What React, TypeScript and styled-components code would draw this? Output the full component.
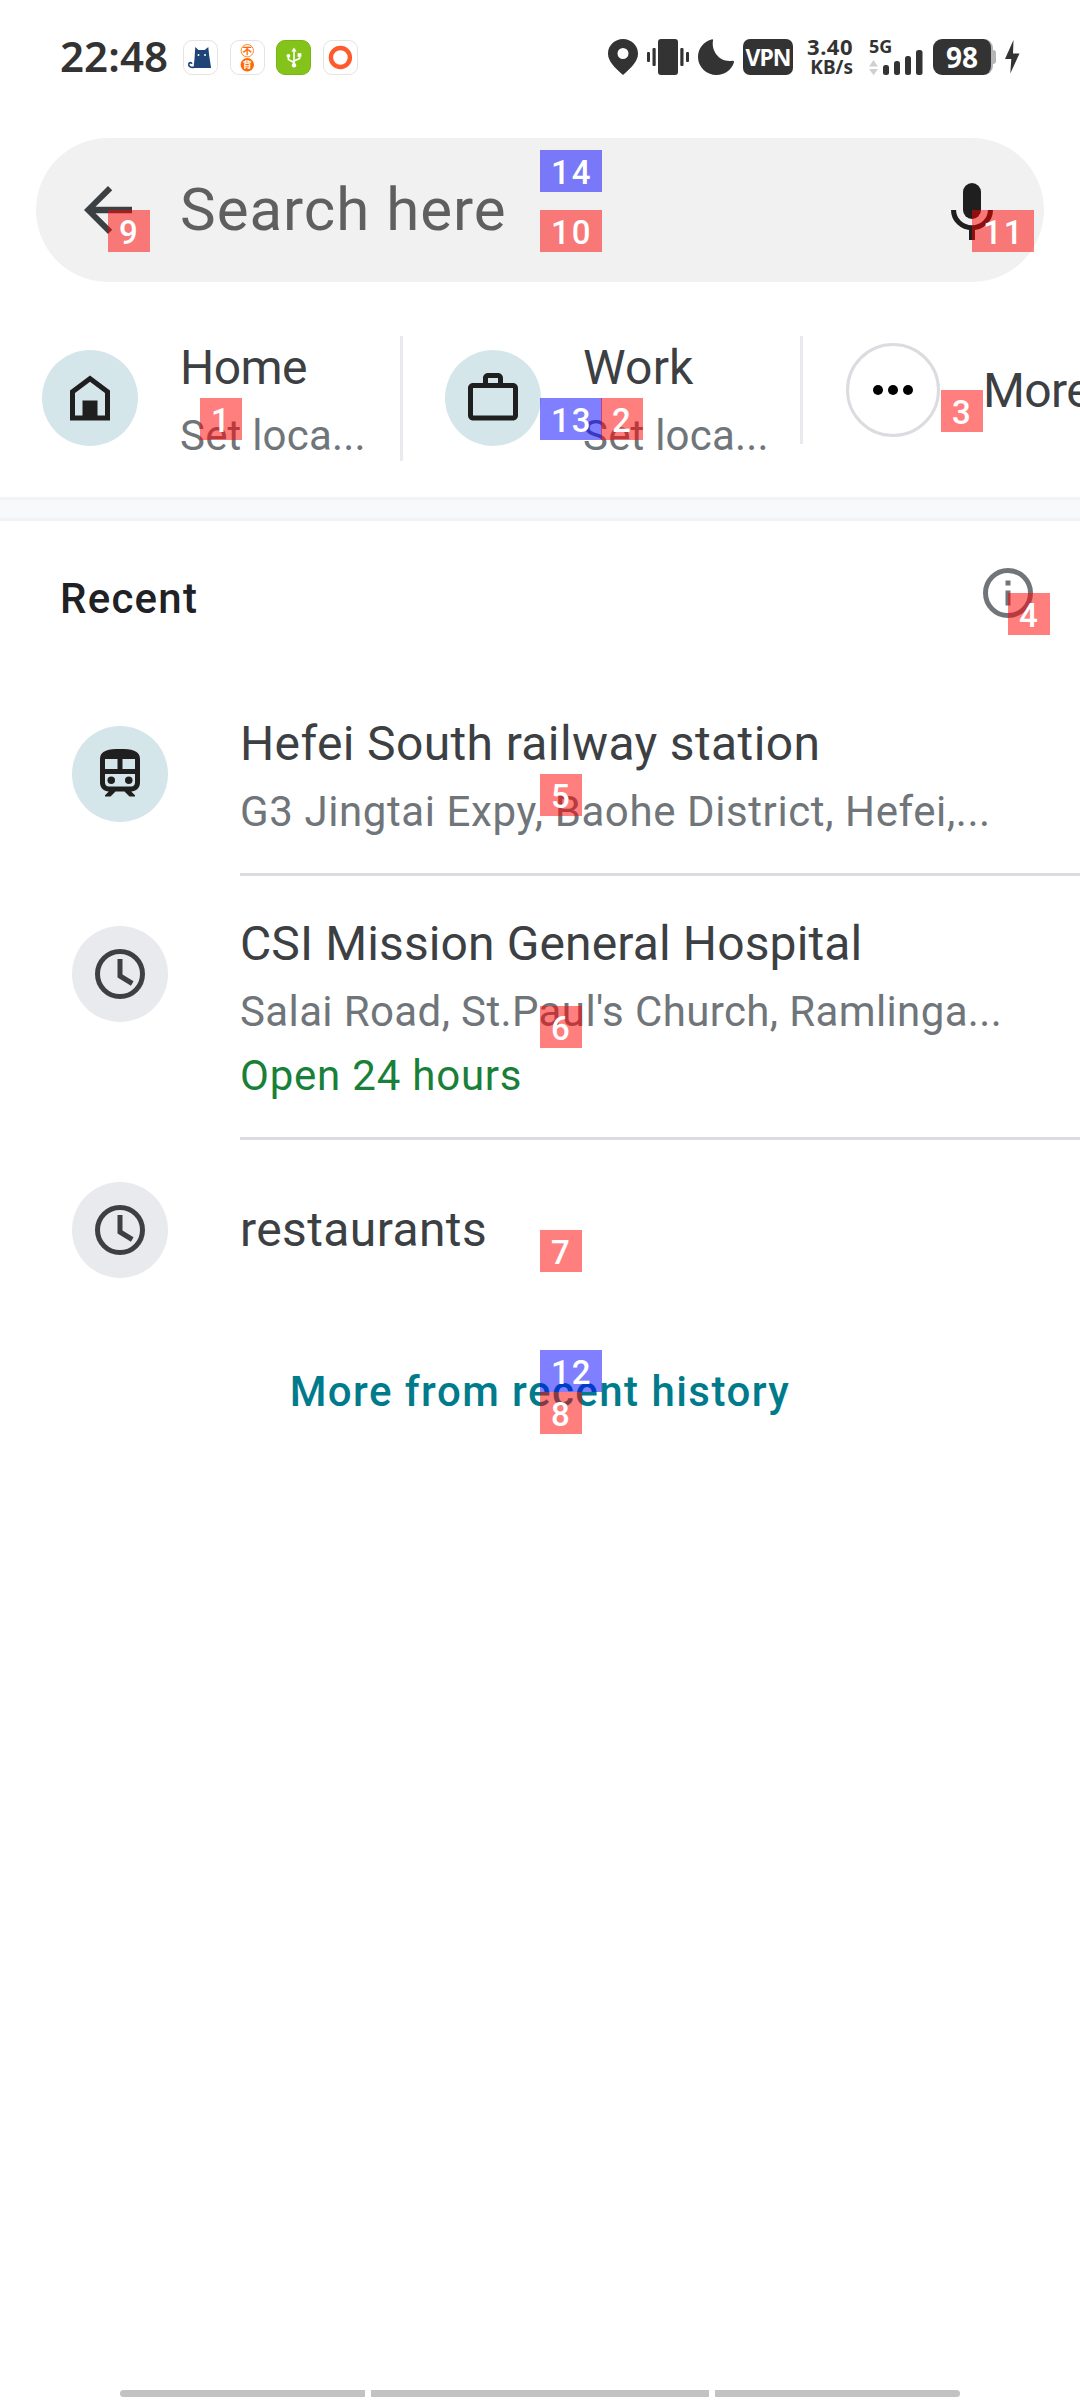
import React from "react";
import styled, { createGlobalStyle } from "styled-components";

const GlobalStyle = createGlobalStyle`
  html, body { margin: 0; padding: 0; background: #fff; }
  *, *::before, *::after { box-sizing: border-box; }
  body { overflow: hidden; }
`;

const Screen = styled.div`
  position: relative;
  display: flex;
  flex-direction: column;
  width: 1080px;
  height: 2400px;
  overflow: hidden;
  background: #fff;
  font-family: Roboto, "Noto Sans", sans-serif;
`;

const Glyph = styled.svg`
  display: block;
  flex: none;
  overflow: visible;
`;

/* Status bar */

const StatusBar = styled.header`
  display: flex;
  align-items: center;
  height: 114px;
  margin-bottom: 24px;
  padding: 0 60px 0 60px;
  color: #333;
  font-family: "Noto Sans", "Open Sans", sans-serif;
`;

const Time = styled.div`
  width: 123px;
  padding-bottom: 2px;
  font-size: 42px;
  font-weight: 600;
  line-height: 50px;
  letter-spacing: 0.1px;
`;

const AppIcons = styled.div`
  display: flex;
  gap: 11.6px;
`;

const AppIcon = styled.div<{ $fill?: string; $edge?: string }>`
  width: 35px;
  height: 35px;
  border: 1px solid ${(p) => p.$edge ?? "#e4e4e4"};
  border-radius: 9px;
  background: ${(p) => p.$fill ?? "#fff"};
`;

const StatusIcons = styled.div`
  display: flex;
  align-items: center;
  gap: 9px;
  height: 36px;
  margin-left: auto;
`;

const VpnTag = styled.div`
  display: flex;
  align-items: center;
  justify-content: center;
  width: 50px;
  height: 36px;
  border-radius: 7px;
  background: #333;
  color: #fff;
  font-size: 23px;
  font-weight: 700;
  line-height: 36px;
  letter-spacing: -0.9px;
`;

const Speed = styled.div`
  display: flex;
  flex-direction: column;
  align-items: flex-end;
  width: 46px;
  margin: 0 7px 0 5px;
  font-weight: 700;
  white-space: nowrap;
`;

const SpeedValue = styled.span`
  font-size: 22px;
  line-height: 19px;
  letter-spacing: 0.5px;
`;

const SpeedUnit = styled.span`
  font-size: 19px;
  line-height: 22px;
`;

const Signal = styled.div`
  display: grid;
  grid-template-rows: 12px 24px;
  width: 54px;
  height: 36px;
  margin-right: 1px;
`;

const SignalLabel = styled.span`
  font-size: 18px;
  font-weight: 700;
  line-height: 14px;
`;

const Battery = styled.div`
  display: flex;
  align-items: center;
  width: 63px;
`;

const BatteryBody = styled.div`
  display: flex;
  align-items: center;
  justify-content: center;
  width: 60px;
  height: 36px;
  border-right: 2px solid #b5b5b5;
  border-radius: 9px;
  background: #333;
  color: #fff;
  font-size: 28px;
  font-weight: 700;
  line-height: 36px;
`;

const BatteryCap = styled.div`
  width: 3px;
  height: 14px;
  border-radius: 0 3px 3px 0;
  background: #b5b5b5;
`;

/* Search field */

const SearchBar = styled.div`
  display: flex;
  align-items: center;
  flex: none;
  height: 144px;
  margin: 0 36px;
  padding: 0 36px;
  border-radius: 72px;
  background: #f1f1f1;
`;

const SearchHint = styled.div`
  flex: 1;
  padding-left: 36px;
  color: #5f5f5f;
  font-size: 60px;
  line-height: 76px;
  letter-spacing: 1px;
`;

/* Shortcuts */

const Shortcuts = styled.nav`
  display: flex;
  flex: none;
  height: 215px;
  padding-top: 54px;
  overflow: hidden;
`;

const Shortcut = styled.div<{ $width: number }>`
  display: flex;
  flex: none;
  width: ${(p) => p.$width}px;
  padding-left: 42px;
`;

const MoreShortcut = styled(Shortcut)`
  padding: 7px 0 0 43px;
`;

const ShortcutRule = styled.div<{ $height: number }>`
  flex: none;
  width: 3px;
  height: ${(p) => p.$height}px;
  background: #e8eaed;
`;

const Disc = styled.div<{ $fill: string }>`
  display: flex;
  align-items: center;
  justify-content: center;
  flex: none;
  width: 96px;
  height: 96px;
  border-radius: 50%;
  background: ${(p) => p.$fill};
`;

const ShortcutDisc = styled(Disc)`
  margin: 14px 42px 0 0;
`;

const RingDisc = styled(Disc)`
  width: 94px;
  height: 94px;
  margin-right: 43px;
  border: 3px solid #dadce0;
`;

const Lines = styled.div`
  display: flex;
  flex-direction: column;
  min-width: 0;
`;

const Title = styled.div<{ $track?: number }>`
  color: #3c4043;
  font-size: 48px;
  line-height: 66px;
  letter-spacing: ${(p) => p.$track ?? 0}px;
  white-space: nowrap;
`;

const Detail = styled.div<{ $track?: number }>`
  color: #70757a;
  font-size: 42px;
  line-height: 70px;
  letter-spacing: ${(p) => p.$track ?? 0}px;
  white-space: nowrap;
`;

const OpenState = styled(Detail)`
  color: #188038;
  line-height: 58px;
`;

const ShortcutLines = styled(Lines)`
  margin-top: -1px;
`;

const MoreTitle = styled(Title)`
  padding-top: 15px;
`;

const Band = styled.div`
  flex: none;
  height: 24px;
  border: solid #f1f3f4;
  border-width: 3px 0;
  background: #f8f9fb;
`;

/* Recent list */

const RecentHeader = styled.div`
  display: flex;
  justify-content: space-between;
  flex: none;
  height: 155px;
  padding: 42px 42px 0 60px;
`;

const RecentTitle = styled.h2`
  margin: 0;
  padding-top: 6px;
  color: #202124;
  font-size: 42px;
  font-weight: 500;
  line-height: 60px;
  letter-spacing: 1.25px;
`;

const Row = styled.div<{ $height: number; $middle?: boolean }>`
  display: flex;
  align-items: ${(p) => (p.$middle ? "center" : "flex-start")};
  flex: none;
  height: ${(p) => p.$height}px;
  padding-left: 72px;
`;

const RowDisc = styled(Disc)<{ $top?: number }>`
  margin: ${(p) => p.$top ?? 0}px 72px 0 0;
`;

const RowBody = styled(Lines)`
  flex: 1;
  height: 100%;
  padding-top: 35px;
  border-bottom: 3px solid #dadce0;
`;

const MoreHistory = styled.div`
  flex: none;
  height: 144px;
  color: #007b8b;
  font-size: 42px;
  font-weight: 500;
  line-height: 144px;
  letter-spacing: 1.45px;
  text-align: center;
`;

const NavBar = styled.footer`
  display: grid;
  grid-template-columns: 245px 338px 245px;
  gap: 6px;
  height: 10px;
  margin: auto 120px 0;
`;

const NavSegment = styled.div<{ $radius?: string }>`
  height: 7px;
  border-radius: ${(p) => p.$radius ?? "0"};
  background: #c2c2c2;
`;

/* Numbered markers over the screen */

const Marker = styled.div<{ $x: number; $y: number; $wide: boolean; $blue: boolean }>`
  position: absolute;
  left: ${(p) => p.$x}px;
  top: ${(p) => p.$y}px;
  width: ${(p) => (p.$wide ? 62 : 42)}px;
  height: 42px;
  padding-left: 11px;
  background: ${(p) => (p.$blue ? "rgba(0,0,255,0.5)" : "rgba(255,0,0,0.5)")};
  color: #fff;
  font-size: 33px;
  font-weight: 500;
  line-height: 45px;
  letter-spacing: 2px;
  white-space: nowrap;
`;

const markers: { n: number; x: number; y: number; blue?: boolean }[] = [
  { n: 14, x: 540, y: 150, blue: true },
  { n: 13, x: 540, y: 398, blue: true },
  { n: 12, x: 540, y: 1350, blue: true },
  { n: 1, x: 200, y: 398 },
  { n: 2, x: 601, y: 398 },
  { n: 3, x: 941, y: 390 },
  { n: 4, x: 1008, y: 593 },
  { n: 5, x: 540, y: 774 },
  { n: 6, x: 540, y: 1006 },
  { n: 7, x: 540, y: 1230 },
  { n: 8, x: 540, y: 1392 },
  { n: 9, x: 108, y: 210 },
  { n: 10, x: 540, y: 210 },
  { n: 11, x: 972, y: 210 },
];

const ClockIcon = () => (
  <Glyph width="60" height="60" viewBox="0 0 24 24" fill="none" stroke="#3c4043" strokeWidth="2">
    <circle cx="12" cy="12" r="9" />
    <path d="M12 6v6.8l4.9 3" />
  </Glyph>
);

const TrainIcon = () => (
  <Glyph width="60" height="60" viewBox="0 0 24 24" fill="#1f1f1f">
    <path
      fillRule="evenodd"
      d="M12 2C7.6 2 4 2.5 4 6v9.5C4 17.43 5.57 19 7.5 19L6 20.5v.5h2.2l2-2h3.6l2 2H18v-.5L16.5 19c1.93 0 3.5-1.57 3.5-3.5V6c0-3.5-3.58-4-8-4zM6 6h5v4H6zM13 6h5v4h-5zM6 12h12v3.5c0 .83-.67 1.5-1.5 1.5h-9C6.67 17 6 16.33 6 15.5z"
    />
    <circle cx="8.5" cy="14.5" r="1.5" />
    <circle cx="15.5" cy="14.5" r="1.5" />
  </Glyph>
);

export default function App() {
  return (
    <Screen>
      <GlobalStyle />
      <StatusBar>
        <Time>22:48</Time>
        <AppIcons>
          <AppIcon>
            <Glyph width="33" height="33" viewBox="1 1 33 33" fill="#1f4478">
              <path d="M12.3 7l3.2 3h6.2l3.6-3 .8 8 2 13H10.500l1-9z" />
              <path d="M11 27.200C7.500 28 5.300 26 5.800 23.800c.4-1.600 2.800-1.600 3 0" fill="none" stroke="#1f4478" strokeWidth="1.600" />
              <circle cx="15.500" cy="15" r="1" fill="#fff" />
              <circle cx="22" cy="15" r="1" fill="#fff" />
            </Glyph>
          </AppIcon>
          <AppIcon>
            <Glyph width="33" height="33" viewBox="1 1 33 33" fontFamily='"Noto Sans CJK SC", sans-serif' fontWeight="700" textAnchor="middle">
              <circle cx="17.300" cy="10.700" r="6.200" fill="#fff" stroke="#ff7a1a" strokeWidth="0.900" />
              <text x="17.300" y="14.200" fontSize="9.500" fill="#ff6a00">不</text>
              <circle cx="17.300" cy="24.800" r="6.700" fill="#ff6a00" />
              <text x="17.300" y="28.100" fontSize="9" fill="#fff">背</text>
            </Glyph>
          </AppIcon>
          <AppIcon $fill="#84c41a" $edge="#79b513">
            <Glyph width="33" height="33" viewBox="1 1 33 33" fill="none" stroke="#fff" strokeWidth="1.600">
              <path d="M18 10v15M18 22.500l-5.600-3v-3M18 21l5.600-2.500V15" />
              <path d="M18 7.500l2.600 4h-5.200z" fill="#fff" stroke="none" />
              <circle cx="12.400" cy="15.800" r="1.900" fill="#fff" stroke="none" />
              <path d="M21.600 13.200h3.800v3.600h-3.800z" fill="#fff" stroke="none" />
              <circle cx="18" cy="25.200" r="2.200" fill="#fff" stroke="none" />
            </Glyph>
          </AppIcon>
          <AppIcon>
            <Glyph width="33" height="33" viewBox="1 1 33 33">
              <circle cx="17.400" cy="17.500" r="9.500" fill="none" stroke="#ff5a2c" strokeWidth="4.400" />
            </Glyph>
          </AppIcon>
        </AppIcons>
        <StatusIcons>
          <Glyph width="30" height="36" viewBox="0 0 30 36" fill="#333">
            <path fillRule="evenodd" d="M15 0C6.700 0 0 6.400 0 14.600 0 22.500 6.500 28.500 15 36c8.500-7.500 15-13.500 15-21.400C30 6.400 23.300 0 15 0zm0 9a5.500 5.500 0 1 1 0 11 5.500 5.500 0 0 1 0-11z" />
          </Glyph>
          <Glyph width="42" height="36" viewBox="0 0 42 36" fill="#333">
            <rect x="11" width="20" height="36" rx="3" />
            <rect x="0" y="13" width="3" height="10" rx="1" />
            <rect x="5.500" y="9" width="3.200" height="18" rx="1" />
            <rect x="33.300" y="9" width="3.200" height="18" rx="1" />
            <rect x="39" y="13" width="3" height="10" rx="1" />
          </Glyph>
          <Glyph width="36" height="36" viewBox="0 0 36 36" fill="#333">
            <path d="M13.500.4c1-.3 1.700.3 1.500 1.200C13 12.500 22 24 34.500 21.800c1.200-.2 1.800.6 1.400 1.700C33.500 31 26.800 36 18.500 36 8.300 36 0 28 0 18 0 9.500 5.500 2.500 13.500.4z" />
          </Glyph>
          <VpnTag>VPN</VpnTag>
          <Speed>
            <SpeedValue>3.40</SpeedValue>
            <SpeedUnit>KB/s</SpeedUnit>
          </Speed>
          <Signal>
            <SignalLabel>5G</SignalLabel>
            <Glyph width="54" height="24" viewBox="0 0 54 24" fill="#333">
              <path d="M4.500 9L9 15.500H0zM0 18h9l-4.500 6.200z" fill="#d0d0d0" />
              <rect x="14" y="14" width="6" height="10" rx="2.500" />
              <rect x="25" y="10" width="6" height="14" rx="2.500" />
              <rect x="36" y="5" width="6" height="19" rx="2.500" />
              <rect x="47" y="-1" width="6.500" height="25" rx="2.500" />
            </Glyph>
          </Signal>
          <Battery>
            <BatteryBody>98</BatteryBody>
            <BatteryCap />
          </Battery>
          <Glyph width="15" height="34" viewBox="0 0 15 34" fill="#333">
            <path d="M8.500 0L0 19h6.300L5.300 33.500 14.500 13.500H8z" />
          </Glyph>
        </StatusIcons>
      </StatusBar>

      <SearchBar>
        <Glyph width="72" height="72" viewBox="0 0 24 24" fill="#3c4043">
          <path d="M20 10.900H7.830l5.590-5.490L12 4l-8 8 8 8 1.410-1.410L7.830 13.100H20z" />
        </Glyph>
        <SearchHint>Search here</SearchHint>
        <Glyph width="72" height="72" viewBox="0 0 24 24" fill="#1f1f1f">
          <rect x="9" y="3" width="6" height="12" rx="3" />
          <path d="M5.850 12a6.150 5.900 0 0 0 12.300 0" fill="none" stroke="#1f1f1f" strokeWidth="1.700" />
          <rect x="11" y="18" width="2" height="4" />
        </Glyph>
      </SearchBar>

      <Shortcuts>
        <Shortcut $width={400}>
          <ShortcutDisc $fill="#d4e6ea">
            <Glyph width="60" height="60" viewBox="0 0 24 24" fill="#1f1f1f">
              <path fillRule="evenodd" d="M12 3L4 9v12h16V9zM12 5.500L18 10v9H6v-9z" />
              <rect x="9" y="13" width="6" height="7" />
            </Glyph>
          </ShortcutDisc>
          <ShortcutLines>
            <Title $track={-0.6}>Home</Title>
            <Detail $track={0.2}>Set loca...</Detail>
          </ShortcutLines>
        </Shortcut>
        <ShortcutRule $height={125} />
        <Shortcut $width={397}>
          <ShortcutDisc $fill="#d4e6ea">
            <Glyph width="60" height="60" viewBox="0 0 24 24" fill="#1f1f1f">
              <path
                fillRule="evenodd"
                d="M10 2h4c1.100 0 2 .9 2 2v2h4c1.100 0 2 .9 2 2v11c0 1.100-.9 2-2 2H4c-1.100 0-2-.9-2-2V8c0-1.100.9-2 2-2h4V4c0-1.100.9-2 2-2zM10 4v2h4V4zM4 8v11h16V8z"
              />
            </Glyph>
          </ShortcutDisc>
          <ShortcutLines>
            <Title $track={0.2}>Work</Title>
            <Detail $track={0.2}>Set loca...</Detail>
          </ShortcutLines>
        </Shortcut>
        <ShortcutRule $height={108} />
        <MoreShortcut $width={320}>
          <RingDisc $fill="#fff">
            <Glyph width="40" height="10" viewBox="0 0 40 10" fill="#000">
              <circle cx="5" cy="5" r="5" />
              <circle cx="20" cy="5" r="5" />
              <circle cx="35" cy="5" r="5" />
            </Glyph>
          </RingDisc>
          <MoreTitle $track={-0.6}>More</MoreTitle>
        </MoreShortcut>
      </Shortcuts>

      <Band />

      <RecentHeader>
        <RecentTitle>Recent</RecentTitle>
        <Glyph width="60" height="60" viewBox="0 0 24 24" fill="#70757a">
          <circle cx="12" cy="12" r="9" fill="none" stroke="#70757a" strokeWidth="2" />
          <rect x="11" y="7" width="2" height="2" />
          <rect x="11" y="11" width="2" height="6" />
        </Glyph>
      </RecentHeader>

      <Row $height={200}>
        <RowDisc $fill="#d4e6ea" $top={50}>
          <TrainIcon />
        </RowDisc>
        <RowBody>
          <Title $track={0.37}>Hefei South railway station</Title>
          <Detail $track={0.6}>G3 Jingtai Expy, Baohe District, Hefei,...</Detail>
        </RowBody>
      </Row>
      <Row $height={264}>
        <RowDisc $fill="#e8eaed" $top={50}>
          <ClockIcon />
        </RowDisc>
        <RowBody>
          <Title $track={0.12}>CSI Mission General Hospital</Title>
          <Detail $track={0.38}>Salai Road, St.Paul's Church, Ramlinga...</Detail>
          <OpenState $track={0.78}>Open 24 hours</OpenState>
        </RowBody>
      </Row>
      <Row $height={180} $middle>
        <RowDisc $fill="#e8eaed">
          <ClockIcon />
        </RowDisc>
        <Title $track={0.4}>restaurants</Title>
      </Row>

      <MoreHistory>More from recent history</MoreHistory>

      <NavBar>
        <NavSegment $radius="4px 0 0 4px" />
        <NavSegment />
        <NavSegment $radius="0 4px 4px 0" />
      </NavBar>

      {markers.map((m) => (
        <Marker key={m.n} $x={m.x} $y={m.y} $wide={m.n > 9} $blue={!!m.blue}>
          {m.n}
        </Marker>
      ))}
    </Screen>
  );
}
